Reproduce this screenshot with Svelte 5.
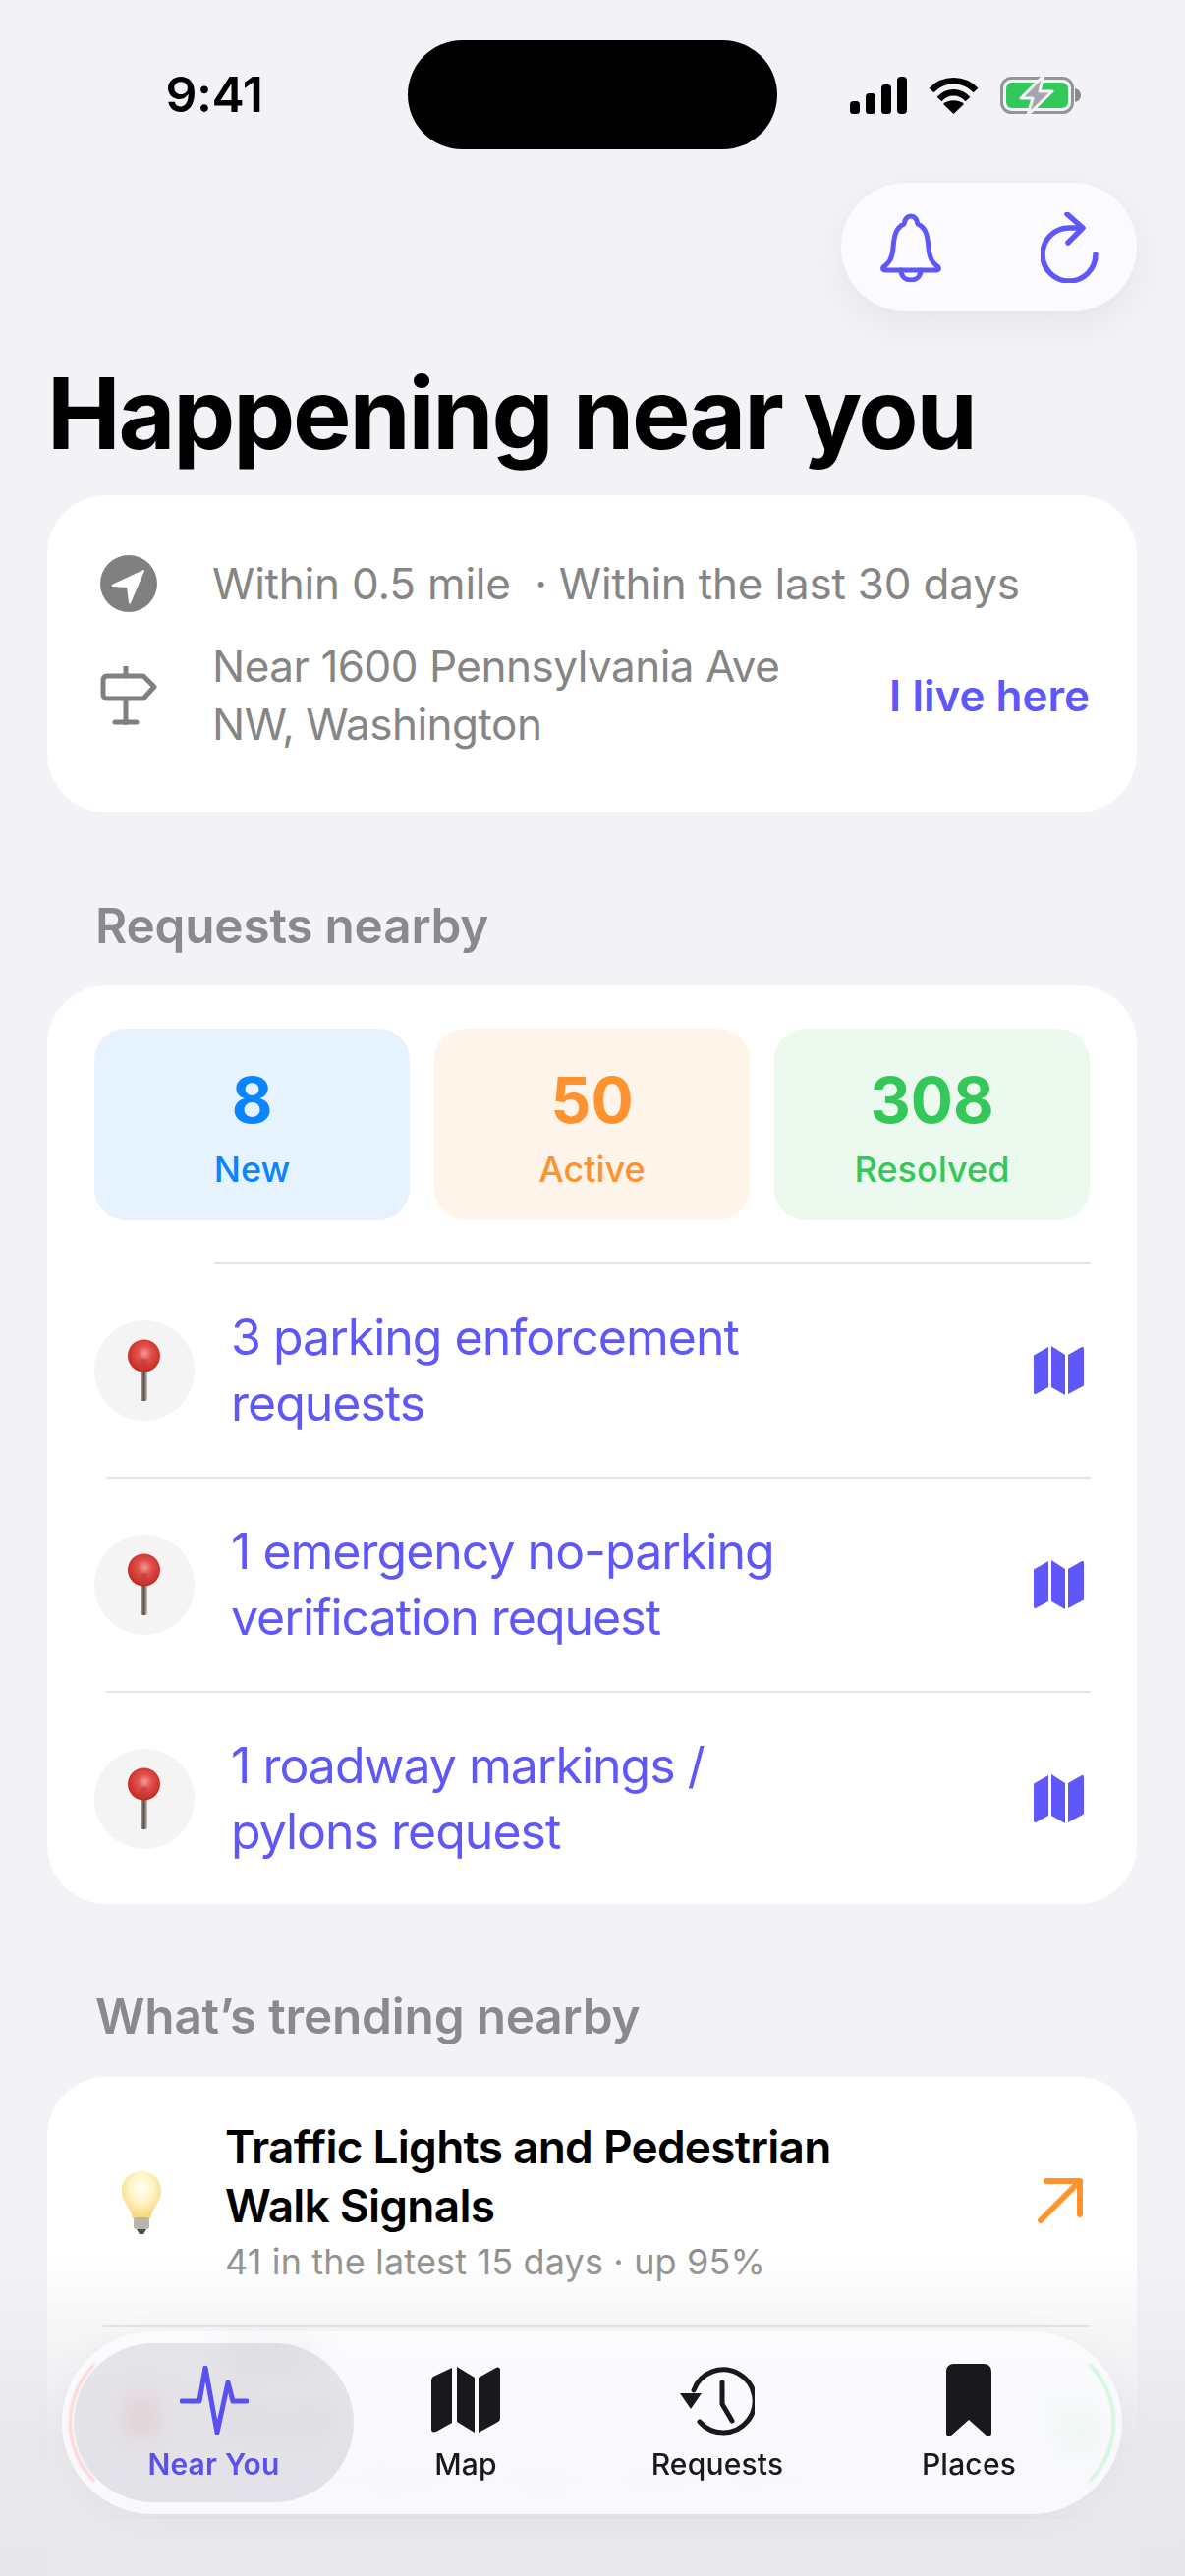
<script lang="ts">
  const stats = [
    { value: '8', label: 'New', kind: 'new' },
    { value: '50', label: 'Active', kind: 'active' },
    { value: '308', label: 'Resolved', kind: 'resolved' },
  ];

  const requests = [
    ['3 parking enforcement', 'requests'],
    ['1 emergency no-parking', 'verification request'],
    ['1 roadway markings /', 'pylons request'],
  ];

  const tabs = ['Near You', 'Map', 'Requests', 'Places'];
</script>

<div class="phone">
  <div class="status">
    <span class="time">9:41</span>
    <div class="island"></div>
    <div class="status-icons">
      <svg width="58" height="38" viewBox="0 0 58 38" fill="#000">
        <rect x="0" y="25" width="10" height="13" rx="3.5" />
        <rect x="16" y="17" width="10" height="21" rx="3.5" />
        <rect x="32" y="8" width="10" height="30" rx="3.5" />
        <rect x="48" y="0" width="10" height="38" rx="4" />
      </svg>
      <svg width="51" height="38" viewBox="0 0 51 38" fill="none" stroke="#000" stroke-width="6.500">
        <path d="M3 14C15 1 36 1 48 14" />
        <path d="M11 23C19 14 32 14 40 23" />
        <path d="M25.500 38L15 28C20 23 31 23 36 28Z" fill="#000" stroke="none" />
      </svg>
      <svg width="82" height="40" viewBox="0 0 82 40">
        <rect x="1.500" y="2.500" width="72" height="35" rx="10" fill="none" stroke="#959595" stroke-width="3" />
        <rect x="6" y="7" width="63" height="26" rx="6" fill="#34c759" />
        <path d="M76 13c4 1 6 4 6 7s-2 6-6 7z" fill="#8a8a8a" />
        <path d="M44 0L21 23h12l-5 17 25-24H40z" fill="#a6a6aa" stroke="#f2f2f7" stroke-width="3" stroke-linejoin="round" />
      </svg>
    </div>
  </div>

  <div class="actions-row">
    <div class="actions">
      <svg width="64" height="70" viewBox="0 0 64 70" fill="none" stroke="#5f57f7" stroke-width="5" stroke-linejoin="round" stroke-linecap="round">
        <path d="M4 55c6-5 9-8 10-20 1-13 3-20 11-24 1-5 3-8 7-8s6 3 7 8c8 4 10 11 11 24 1 12 4 15 10 20 1 2 0 3-2 3H6c-2 0-3-1-2-3z" />
        <path d="M22 58c0 6 4 10 10 10s10-4 10-10" />
      </svg>
      <svg width="60" height="72" viewBox="0 0 60 72" fill="none" stroke="#5f57f7" stroke-width="5.500" stroke-linecap="round" stroke-linejoin="round">
        <path d="M56 43a27 27 0 1 1-27-27h13" />
        <path d="M27 2l16 14-15 15" />
      </svg>
    </div>
  </div>

  <h1>Happening near you</h1>

  <section class="card location">
    <div class="loc-row within">
      <span class="loc-icon">
        <svg width="58" height="58" viewBox="0 0 58 58">
          <circle cx="29" cy="29" r="29" fill="#808080" />
          <path d="M44 15L12 30c-1 1 0 2 1 2l14 1 2 15c0 2 2 2 2 1L45 16c0-1 0-1-1-1z" fill="#fff" />
        </svg>
      </span>
      <span class="loc-text">Within 0.5 mile &nbsp;· Within the last 30 days</span>
    </div>
    <div class="loc-row address">
      <span class="loc-icon">
        <svg width="58" height="60" viewBox="0 0 58 60" fill="none" stroke="#808080" stroke-width="5" stroke-linecap="round" stroke-linejoin="round">
          <path d="M26 1v9M26 34v24M15 57h22" />
          <path d="M7 10h37l11 11-11 12H7c-3 0-4-2-4-4V14c0-2 1-4 4-4z" />
        </svg>
      </span>
      <span class="loc-text">Near 1600 Pennsylvania Ave<br />NW, Washington</span>
      <span class="live">I live here</span>
    </div>
  </section>

  <h2>Requests nearby</h2>

  <section class="card requests">
    <div class="stats">
      {#each stats as s}
        <div class="stat {s.kind}">
          <strong>{s.value}</strong>
          <span>{s.label}</span>
        </div>
      {/each}
    </div>
    {#each requests as lines, i}
      <div class="req" class:first={i === 0}>
        <span class="pin">
          <svg width="36" height="64" viewBox="0 0 36 64">
            <defs>
              <radialGradient id="ball{i}" cx="0.52" cy="0.42" r="0.6">
                <stop offset="0" stop-color="#f49a94" />
                <stop offset="0.35" stop-color="#e2534f" />
                <stop offset="1" stop-color="#c3241f" />
              </radialGradient>
              <linearGradient id="needle{i}" x1="0" x2="1" y1="0" y2="0">
                <stop offset="0" stop-color="#cbb9a8" />
                <stop offset="0.5" stop-color="#555050" />
                <stop offset="1" stop-color="#cfc2b6" />
              </linearGradient>
            </defs>
            <rect x="14" y="30" width="7" height="33" rx="2.500" fill="url(#needle{i})" />
            <circle cx="17.500" cy="17" r="16.500" fill="url(#ball{i})" />
            <rect x="14" y="20" width="7" height="12" rx="3" fill="#b93c3c" opacity="0.5" />
          </svg>
        </span>
        <span class="req-text">{lines[0]}<br />{lines[1]}</span>
        <svg class="req-map" width="52" height="50" viewBox="0 0 52 50" fill="#5f57f7">
          <path d="M1 11c0-1 0-2 1-2L16 1v41L3 49c-1 0-2 0-2-2z" />
          <path d="M19 0l14 9v41l-14-8z" />
          <path d="M36 9l14-8c1 0 2 0 2 2v36c0 1 0 2-1 2l-15 8z" />
        </svg>
      </div>
    {/each}
  </section>

  <h2 class="trend-title">What’s trending nearby</h2>

  <section class="card trending">
    <div class="trend top">
      <svg class="bulb" width="42" height="66" viewBox="0 0 42 66">
        <defs>
          <radialGradient id="glass" cx="0.5" cy="0.36" r="0.62">
            <stop offset="0" stop-color="#fffef8" />
            <stop offset="0.5" stop-color="#fff4c6" />
            <stop offset="1" stop-color="#f7d675" />
          </radialGradient>
        </defs>
        <path d="M21 1C9 1 1 10 1 21c0 11 9 17 11 28h18c2-11 11-17 11-28C41 10 33 1 21 1z" fill="url(#glass)" />
        <rect x="13" y="48" width="16" height="12" rx="2" fill="#b9b5ab" />
        <path d="M16 60h10l-3 5h-4z" fill="#4a4a48" />
      </svg>
      <div class="trend-body">
        <div class="trend-name">Traffic Lights and Pedestrian<br />Walk Signals</div>
        <div class="trend-sub">41 in the latest 15 days · up 95%</div>
      </div>
      <svg class="trend-arrow" width="48" height="48" viewBox="0 0 48 48" fill="none" stroke="#ff922e" stroke-width="6" stroke-linecap="round" stroke-linejoin="round">
        <path d="M10 4h34v34M44 4L4 44" />
      </svg>
    </div>
    <div class="trend second">
      <span class="red-dot"></span>
      <div class="trend-body">
        <div class="trend-name">1651<br />Road</div>
        <div class="trend-sub">0 in the latest 15 days · down 100%</div>
      </div>
      <svg class="trend-arrow" width="60" height="48" viewBox="0 0 48 48" fill="none" stroke="#34c759" stroke-width="6" stroke-linecap="round" stroke-linejoin="round">
        <path d="M44 10v34H10M44 44L4 4" />
      </svg>
    </div>
    <div class="trend third">
      <span class="red-dot"></span>
      <div class="trend-body">
        <div class="trend-name">Parking Enforcement</div>
      </div>
    </div>
  </section>

  <div class="fade"></div>

  <nav class="tabbar">
    {#each tabs as tab, i}
      <div class="tab" class:active={i === 0}>
        <div class="tab-icon">
          {#if i === 0}
            <svg width="70" height="70" viewBox="0 0 70 70" fill="none" stroke="#5a50f0" stroke-width="5" stroke-linecap="round" stroke-linejoin="round">
              <path d="M2 36H20L26 2L38 68L49 17L54 36H68" />
            </svg>
          {:else if i === 1}
            <svg width="70" height="68" viewBox="0 0 70 68" fill="#19191b">
              <path d="M0 14c0-2 1-3 2-4L21 1v56L5 66c-3 1-5 0-5-2z" />
              <path d="M26 0l18 11v56L26 56z" />
              <path d="M48 11L66 1c2-1 4 0 4 2v49c0 2-1 3-2 4L48 67z" />
            </svg>
          {:else if i === 2}
            <svg width="76" height="72" viewBox="0 0 76 72" fill="none" stroke="#19191b" stroke-width="5" stroke-linecap="round" stroke-linejoin="round">
              <path d="M14 26A32 32 0 1 1 20 58" />
              <path d="M43 18v22l10 17" />
              <path d="M0 29h22L11 45z" fill="#19191b" stroke="none" />
            </svg>
          {:else}
            <svg width="46" height="74" viewBox="0 0 46 74" fill="#19191b">
              <path d="M8 0h30c5 0 8 3 8 8v62c0 4-3 5-5 3L23 57 5 73c-2 2-5 1-5-3V8c0-5 3-8 8-8z" />
            </svg>
          {/if}
        </div>
        <span>{tab}</span>
      </div>
    {/each}
  </nav>
</div>

<style>
  :global(body) {
    margin: 0;
    background: #f2f2f7;
  }

  .phone {
    position: relative;
    width: 1206px;
    height: 2622px;
    overflow: hidden;
    background: #f2f2f7;
    font-family: Inter, 'Liberation Sans', sans-serif;
    color: #000;
    padding: 0 48px;
    box-sizing: border-box;
  }

  .status {
    display: flex;
    align-items: center;
    height: 111px;
    padding-top: 41px;
    margin: 0 -48px;
    position: relative;
  }

  .time {
    width: 415px;
    padding-left: 21px;
    box-sizing: border-box;
    text-align: center;
    font-size: 50px;
    font-weight: 600;
    letter-spacing: -0.5px;
    position: relative;
    top: -1px;
  }

  .island {
    width: 376px;
    height: 111px;
    background: #000;
    border-radius: 56px;
  }

  .status-icons {
    display: flex;
    align-items: center;
    gap: 22px;
    margin-left: 74px;
  }

  .actions-row {
    display: flex;
    justify-content: flex-end;
    margin-top: 34px;
  }

  .actions {
    width: 301px;
    height: 131px;
    border-radius: 66px;
    background: #fbfaff;
    box-shadow: 0 14px 44px rgba(0, 0, 0, 0.06);
    display: flex;
    align-items: center;
    justify-content: space-between;
    padding: 0 38px 0 39px;
    box-sizing: border-box;
    margin-right: 1px;
  }

  h1 {
    margin: 43px 0 0;
    font-size: 100px;
    line-height: 121px;
    font-weight: 700;
    letter-spacing: -2.2px;
    padding-bottom: 1px;
  }

  .card {
    background: #fff;
    border-radius: 60px;
    width: 1109px;
  }

  .location {
    margin-top: 22px;
    height: 323px;
    padding: 60px 48px 0 54px;
    box-sizing: border-box;
  }

  .loc-row {
    display: flex;
    align-items: center;
    color: #858585;
    font-size: 44px;
    line-height: 60px;
    letter-spacing: -0.5px;
  }

  .within {
    letter-spacing: -0.2px;
  }

  .loc-icon {
    width: 58px;
    height: 60px;
    margin-right: 56px;
    display: flex;
    align-items: center;
  }

  .address {
    margin-top: 25px;
    line-height: 59px;
  }

  .live {
    margin-left: auto;
    color: #5f57f7;
    font-weight: 600;
    letter-spacing: 0;
  }

  h2 {
    margin: 0;
    padding-left: 49px;
    font-size: 49.5px;
    font-weight: 600;
    line-height: 58px;
    letter-spacing: -0.2px;
    color: #8a8a8e;
  }

  .location + h2 {
    margin-top: 86px;
  }

  .requests {
    margin-top: 32px;
    height: 935px;
    padding: 44px 47px 0 48px;
    box-sizing: border-box;
  }

  .stats {
    display: grid;
    grid-template-columns: repeat(3, 321px);
    gap: 25px;
  }

  .stat {
    height: 195px;
    border-radius: 32px;
    display: flex;
    flex-direction: column;
    align-items: center;
    padding-top: 36px;
    box-sizing: border-box;
    font-size: 36px;
    font-weight: 500;
  }

  .stat strong {
    font-size: 64px;
    font-weight: 700;
    line-height: 74px;
  }

  .stat span {
    line-height: 48px;
    margin-top: 9px;
  }

  .new {
    background: #e6f3ff;
    color: #0a84ff;
  }

  .active {
    background: #fff4ea;
    color: #ff9230;
  }

  .resolved {
    background: #ecf9ef;
    color: #34c759;
  }

  .req {
    display: flex;
    align-items: center;
    height: 216px;
    border-top: 2px solid #e4e4e7;
    margin-left: 12px;
  }

  .req.first {
    margin-top: 43px;
    margin-left: 122px;
  }

  .req.first .pin {
    margin-left: -122px;
  }

  .pin {
    width: 102px;
    height: 102px;
    border-radius: 50%;
    background: #f4f4f4;
    display: flex;
    align-items: center;
    justify-content: center;
    margin-left: -12px;
    margin-right: 37px;
    flex: none;
  }

  .req-text {
    color: #5f57f7;
    font-size: 50px;
    line-height: 67px;
    letter-spacing: -1px;
    flex: 1;
  }

  .req-map {
    margin-right: 7px;
  }

  .requests + .trend-title {
    margin-top: 85px;
  }

  .trending {
    margin-top: 33px;
    padding: 0 47px 0 57px;
    box-sizing: border-box;
  }

  .trend {
    display: flex;
    align-items: center;
    border-bottom: 2px solid #e4e4e7;
    box-sizing: border-box;
  }

  .top {
    height: 255px;
    padding-top: 2px;
  }

  .bulb {
    margin-left: 18px;
    margin-right: 64px;
    flex: none;
  }

  .trend-body {
    flex: 1;
  }

  .trend-name {
    font-size: 46px;
    font-weight: 600;
    line-height: 60px;
    letter-spacing: -0.75px;
  }

  .trend-sub {
    font-size: 36px;
    line-height: 54px;
    letter-spacing: 0.15px;
    color: #8e8e8e;
  }

  .trend-arrow {
    margin-right: 7px;
    margin-bottom: 4px;
  }

  .second {
    height: 195px;
    padding-bottom: 14px;
  }

  /* what shows through the glass bar sits above the fade */
  .second .red-dot,
  .second .trend-arrow,
  .second .trend-name {
    position: relative;
    z-index: 1;
  }

  .second .trend-name {
    opacity: 0.45;
  }

  .red-dot {
    width: 36px;
    height: 46px;
    margin: 0 64px 0 21px;
    border-radius: 50%;
    background: #e5534f;
    flex: none;
  }

  .second .trend-arrow {
    margin-right: -10px;
    margin-bottom: -12px;
  }

  .third {
    height: 195px;
    align-items: flex-start;
    padding-top: 47px;
    border-bottom: none;
  }

  .third .red-dot {
    visibility: hidden;
  }

  .fade {
    position: absolute;
    left: 0;
    right: 0;
    bottom: 0;
    height: 332px;
    background: linear-gradient(to bottom, rgba(231, 231, 235, 0) 0%, rgba(231, 231, 235, 0.35) 23%, rgba(231, 231, 235, 0.85) 60%, rgba(231, 231, 235, 0.93) 100%);
    pointer-events: none;
  }

  .tabbar {
    position: absolute;
    z-index: 2;
    left: 63px;
    top: 2373px;
    width: 1079px;
    height: 186px;
    border-radius: 93px;
    background: rgba(252, 251, 255, 0.84);
    backdrop-filter: blur(14px);
    box-shadow: 0 6px 40px rgba(0, 0, 0, 0.04);
    display: flex;
    align-items: center;
    padding-left: 12px;
    box-sizing: border-box;
  }

  .tabbar::before,
  .tabbar::after {
    content: '';
    position: absolute;
    inset: 7px;
    border-radius: 86px;
    border: 3px solid transparent;
    filter: blur(1px);
    pointer-events: none;
  }

  .tabbar::before {
    border-left-color: rgba(255, 170, 170, 0.5);
  }

  .tabbar::after {
    border-right-color: rgba(170, 245, 190, 0.6);
  }

  .tab {
    flex: none;
    width: 256px;
    height: 162px;
    display: flex;
    flex-direction: column;
    align-items: center;
    justify-content: flex-end;
    padding-bottom: 21px;
    box-sizing: border-box;
    font-size: 30px;
    font-weight: 500;
    letter-spacing: 0.2px;
    color: #19191b;
  }

  .tab-icon {
    height: 78px;
    display: flex;
    align-items: center;
    margin-bottom: 8px;
  }

  .tab.active {
    width: 285px;
    margin-right: -14px;
    border-radius: 81px;
    background: rgba(120, 120, 128, 0.17);
    color: #5a50f0;
    font-weight: 600;
  }
</style>
